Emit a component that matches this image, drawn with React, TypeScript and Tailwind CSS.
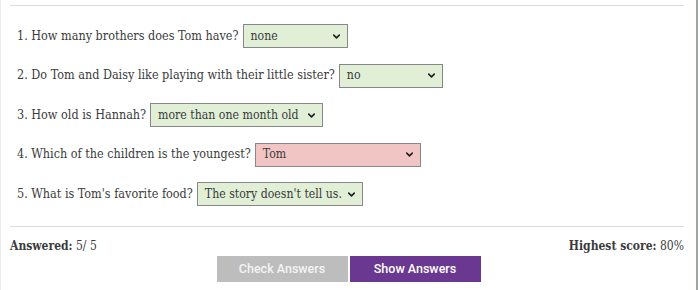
import { ChevronDown } from "lucide-react";

const QUESTIONS = [
  { q: "1. How many brothers does Tom have?", a: "none", w: "w-[105px]", ok: true },
  { q: "2. Do Tom and Daisy like playing with their little sister?", a: "no", w: "w-[104px]", ok: true },
  { q: "3. How old is Hannah?", a: "more than one month old", w: "w-[173px]", ok: true },
  { q: "4. Which of the children is the youngest?", a: "Tom", w: "w-[166px]", ok: false },
  { q: "5. What is Tom's favorite food?", a: "The story doesn't tell us.", w: "w-[166px]", ok: true },
];

export default function App() {
  return (
    <div className="w-[700px] h-[290px] bg-white overflow-hidden">
      <div className="w-[698px] h-full border-r-2 border-l border-r-[#97a897] border-l-[#ececec] px-[9px] pt-[5px] font-['DejaVu_Serif',serif] text-[#3b3b3b] [font-stretch:condensed]">
        <div className="border-t border-[#dcdcdc] mr-[3px]" />
        <div className="flex flex-col gap-[15.5px] pt-[18px] pl-[7px]">
          {QUESTIONS.map((item, idx) => (
            <div key={idx} className="flex items-center h-[24px] text-[12.5px] whitespace-nowrap">
              <span className="mr-[4px]">{item.q}</span>
              <span
                className={`${item.w} shrink-0 h-[24px] flex items-center justify-between border border-[#888] pl-[7px] pr-[5px] text-[12.2px] ${
                  item.ok ? "bg-[#e0efd6]" : "bg-[#f2c5c5]"
                }`}
              >
                <span>{item.a}</span>
                <ChevronDown className="w-[11px] h-[11px] text-[#222] shrink-0" strokeWidth={3.5} />
              </span>
            </div>
          ))}
        </div>
        <div className="border-t border-[#dcdcdc] mt-[20px] mr-[3px]" />
        <div className="flex justify-between items-center mt-[10px] text-[12px] pr-[3px]">
          <span>
            <b className="font-bold">Answered:</b> 5/ 5
          </span>
          <span>
            <b className="font-bold">Highest score:</b> 80%
          </span>
        </div>
        <div className="flex justify-center gap-[2px] mt-[1px] font-['Roboto',sans-serif] text-[12.5px] font-medium [font-stretch:normal]">
          <button className="w-[131px] h-[26px] bg-[#bdbdbd] text-[#f4f4f4]">Check Answers</button>
          <button className="w-[131px] h-[26px] bg-[#6b3891] text-white">Show Answers</button>
        </div>
      </div>
    </div>
  );
}
